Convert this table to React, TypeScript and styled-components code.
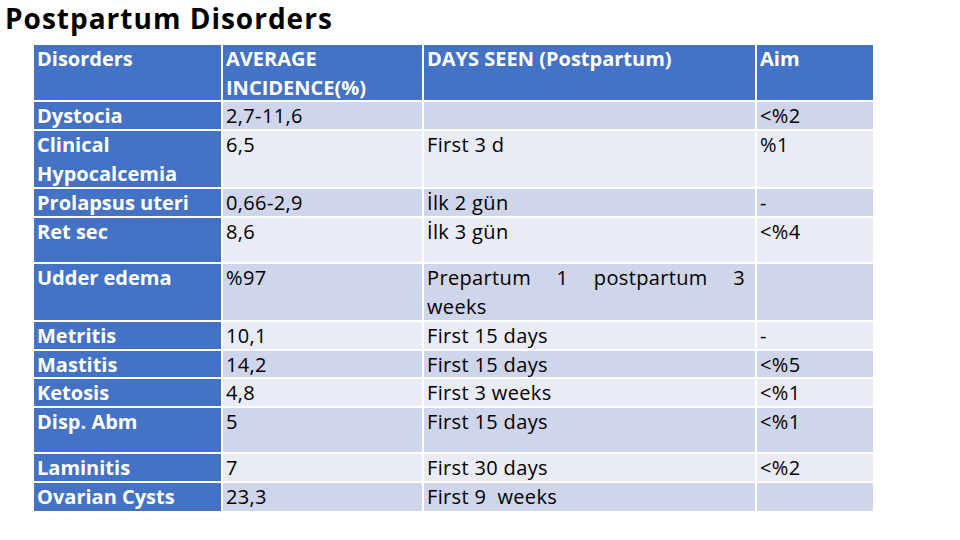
import React from "react";
import styled, { createGlobalStyle, css } from "styled-components";

const Global = createGlobalStyle`
  html, body { margin: 0; padding: 0; background: #ffffff; }
  body { font-family: "Open Sans", "DejaVu Sans", sans-serif; }
`;

const Slide = styled.div`
  width: 960px;
  height: 540px;
  background: #ffffff;
  overflow: hidden;
  display: flex;
  flex-direction: column;
`;

const Title = styled.h1`
  margin: 0;
  padding-left: 5px;
  font-family: "Open Sans", sans-serif;
  font-weight: 700;
  font-size: 28px;
  line-height: 37px;
  color: #000000;
  letter-spacing: 1px;
`;

const Table = styled.div`
  margin: 8px 0 0 34px;
  width: 839px;
  display: flex;
  flex-direction: column;
  gap: 2px;
`;

const Row = styled.div<{ $h: number }>`
  display: grid;
  grid-template-columns: 187px 199px 331px 116px;
  column-gap: 2px;
  height: ${(p) => p.$h}px;
`;

type Tone = "head" | "dark" | "light";

const Cell = styled.div<{ $tone: Tone; $first?: boolean }>`
  padding: 0 4px 0 3px;
  font-size: 20px;
  line-height: 28.5px;
  letter-spacing: 0.35px;
  color: #000000;
  overflow: hidden;
  background: ${(p) =>
    p.$tone === "head" ? "#4472c4" : p.$tone === "dark" ? "#cfd5ea" : "#e9ebf5"};
  ${(p) =>
    (p.$tone === "head" || p.$first) &&
    css`
      background: #4472c4;
      color: #ffffff;
      font-weight: 700;
      letter-spacing: 0;
    `}
`;

const JustifiedLine = styled.span`
  display: block;
  padding-right: 6px;
  text-align: justify;
  text-align-last: justify;
`;

type RowData = {
  h: number;
  tone: Tone;
  cells: React.ReactNode[];
};

const rows: RowData[] = [
  { h: 55, tone: "head", cells: ["Disorders", "AVERAGE INCIDENCE(%)", "DAYS SEEN (Postpartum)", "Aim"] },
  { h: 27, tone: "dark", cells: ["Dystocia", "2,7-11,6", "", "<%2"] },
  { h: 56, tone: "light", cells: ["Clinical Hypocalcemia", "6,5", "First 3 d", "%1"] },
  { h: 27, tone: "dark", cells: ["Prolapsus uteri", "0,66-2,9", "İlk 2 gün", "-"] },
  { h: 44, tone: "light", cells: ["Ret sec", "8,6", "İlk 3 gün", "<%4"] },
  {
    h: 56,
    tone: "dark",
    cells: [
      "Udder edema",
      "%97",
      <>
        <JustifiedLine>Prepartum 1 postpartum 3</JustifiedLine>
        weeks
      </>,
      "",
    ],
  },
  { h: 27, tone: "light", cells: ["Metritis", "10,1", "First 15 days", "-"] },
  { h: 26, tone: "dark", cells: ["Mastitis", "14,2", "First 15 days", "<%5"] },
  { h: 27, tone: "light", cells: ["Ketosis", "4,8", "First 3 weeks", "<%1"] },
  { h: 44, tone: "dark", cells: ["Disp. Abm", "5", "First 15 days", "<%1"] },
  { h: 27, tone: "light", cells: ["Laminitis", "7", "First 30 days", "<%2"] },
  { h: 28, tone: "dark", cells: ["Ovarian Cysts", "23,3", "First 9\u00a0 weeks", ""] },
];

export default function App() {
  return (
    <Slide>
      <Global />
      <Title>Postpartum Disorders</Title>
      <Table>
        {rows.map((r, i) => (
          <Row key={i} $h={r.h}>
            {r.cells.map((c, j) => (
              <Cell key={j} $tone={r.tone} $first={j === 0}>
                {c}
              </Cell>
            ))}
          </Row>
        ))}
      </Table>
    </Slide>
  );
}
